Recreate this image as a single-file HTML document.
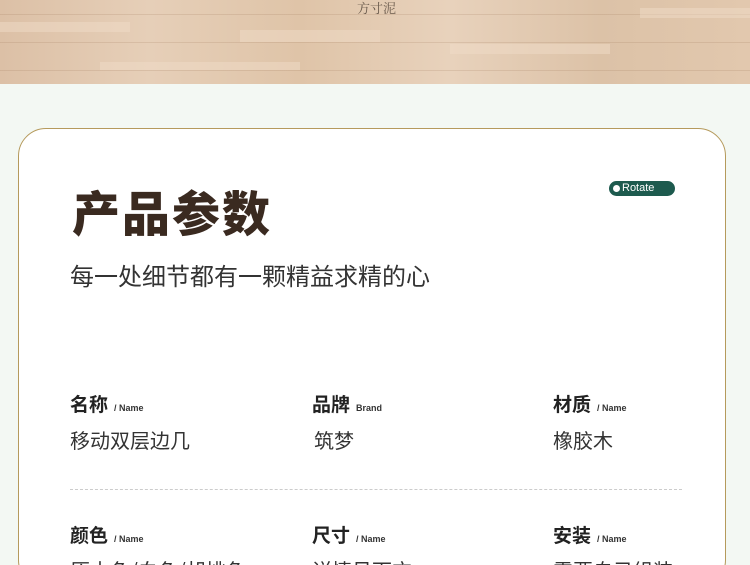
<!DOCTYPE html>
<html><head><meta charset="utf-8">
<style>
*{margin:0;padding:0;box-sizing:border-box}
html,body{width:750px;height:565px;overflow:hidden}
body{background:#f3f8f3;font-family:"Liberation Sans","Noto Sans CJK SC",sans-serif;position:relative}
.wood{position:absolute;left:0;top:0;width:750px;height:84px;background:
repeating-linear-gradient(180deg,rgba(255,255,255,0) 0 14px,rgba(150,110,80,.18) 14px 15px,rgba(255,255,255,0) 15px 28px),
linear-gradient(90deg,#dcc0a6,#e6cfb8 20%,#dfc4a8 40%,#e8d2bc 60%,#dcc2a7 80%,#e2c8ae);}
.blk{position:absolute;background:rgba(240,220,200,.5)}
.logo{position:absolute;left:357px;top:-2px;font-family:"Noto Serif CJK SC",serif;font-size:13px;color:#6a5a4c}
.card{position:absolute;left:18px;top:128px;width:708px;height:460px;background:#fff;border:1px solid #b59a5c;border-radius:28px}
h1{position:absolute;left:72px;top:180px;font-size:48px;font-weight:900;color:#3a2a20;letter-spacing:2px;line-height:60px;font-family:"Noto Sans CJK SC",sans-serif}
.sub{position:absolute;left:70px;top:259px;font-size:24px;color:#333;font-family:"Noto Sans CJK SC",sans-serif;line-height:32px}
.tag{position:absolute;left:609px;top:181px;width:66px;height:15px;background:#1d5a4e;border-radius:8px;color:#fff;font-size:11px;line-height:15px;padding-left:13px}
.tag:before{content:"";position:absolute;left:4px;top:4px;width:7px;height:7px;border-radius:50%;background:#fff}
.k{position:absolute;font-size:19px;font-weight:bold;color:#222;font-family:"Noto Sans CJK SC",sans-serif;line-height:28px}
.k span{font-size:9px;font-weight:bold;color:#333;margin-left:6px;font-family:"Liberation Sans",sans-serif}
.v{position:absolute;font-size:20px;color:#333;font-family:"Noto Sans CJK SC",sans-serif;line-height:28px}
.line{position:absolute;left:70px;top:489px;width:612px;border-top:1px dashed #ccc}
</style></head><body>
<div class="wood">
<div class="blk" style="left:0;top:22px;width:130px;height:10px"></div>
<div class="blk" style="left:240px;top:30px;width:140px;height:12px"></div>
<div class="blk" style="left:450px;top:44px;width:160px;height:10px"></div>
<div class="blk" style="left:640px;top:8px;width:110px;height:10px"></div>
<div class="blk" style="left:100px;top:62px;width:200px;height:8px"></div>
</div>
<div class="logo">方寸泥</div>
<div class="card"></div>
<h1>产品参数</h1>
<div class="tag">Rotate</div>
<div class="sub">每一处细节都有一颗精益求精的心</div>
<div class="k" style="left:70px;top:390px">名称<span>/ Name</span></div>
<div class="k" style="left:312px;top:390px">品牌<span>Brand</span></div>
<div class="k" style="left:553px;top:390px">材质<span>/ Name</span></div>
<div class="v" style="left:70px;top:426px">移动双层边几</div>
<div class="v" style="left:314px;top:426px">筑梦</div>
<div class="v" style="left:553px;top:426px">橡胶木</div>
<div class="line"></div>
<div class="k" style="left:70px;top:521px">颜色<span>/ Name</span></div>
<div class="k" style="left:312px;top:521px">尺寸<span>/ Name</span></div>
<div class="k" style="left:553px;top:521px">安装<span>/ Name</span></div>
<div class="v" style="left:70px;top:556px">原木色/白色/胡桃色</div>
<div class="v" style="left:312px;top:556px">详情见下方</div>
<div class="v" style="left:553px;top:556px">需要自己组装</div>
</body></html>
